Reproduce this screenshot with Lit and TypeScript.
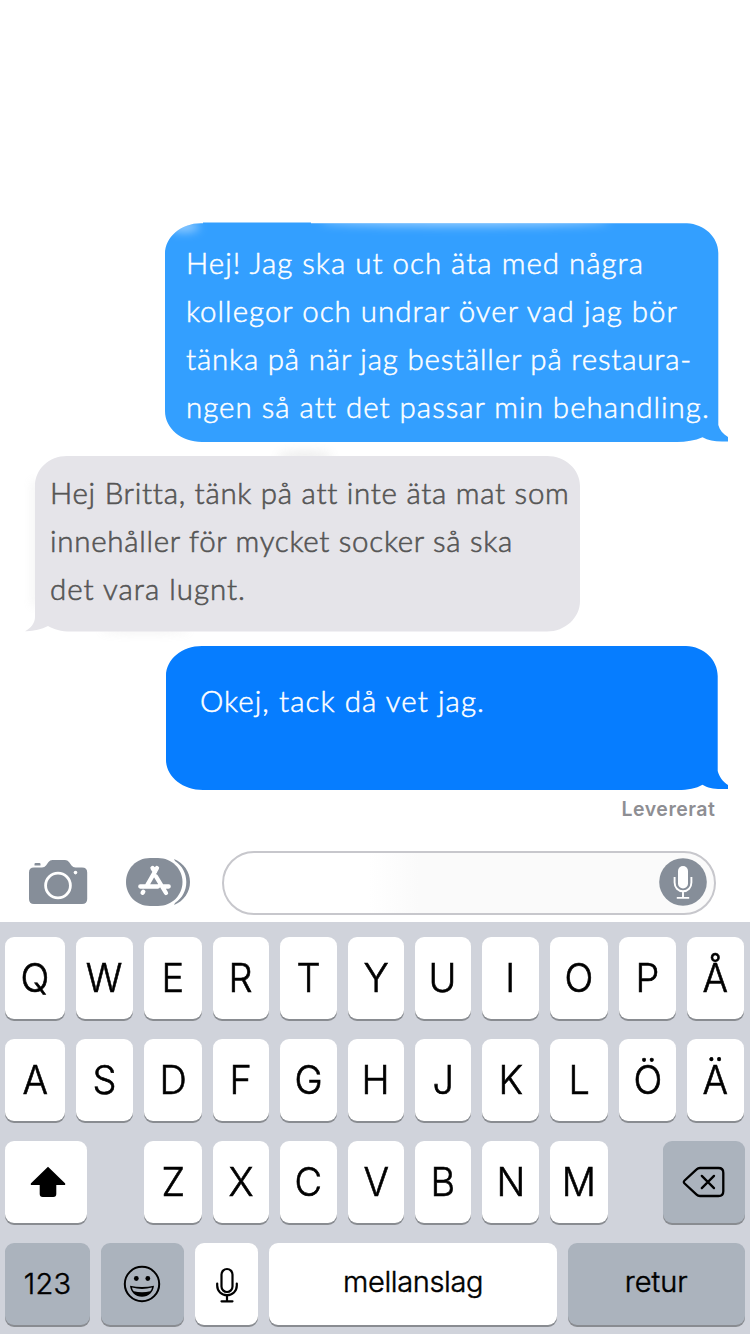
import { LitElement, html, svg, css } from "lit";
import { customElement, property } from "lit/decorators.js";
import { classMap } from "lit/directives/class-map.js";

type Line = { text: string; width: number };

/** One line of text, tracked so that its advance equals the given width. */
@customElement("tracked-line")
class TrackedLine extends LitElement {
  @property() text = "";
  @property({ type: Number }) width = 0;
  static styles = css`
    :host { display: block; white-space: nowrap; }
    .run { display: inline-block; }
  `;
  render() {
    return html`<span class="run">${this.text}</span>`;
  }
  updated() {
    const run = this.renderRoot.querySelector(".run") as HTMLElement;
    run.style.letterSpacing = "0px";
    const natural = run.getBoundingClientRect().width;
    run.style.letterSpacing = `${(this.width - natural) / this.text.length}px`;
  }
}

const shapes: Record<string, { w: number; h: number; d: string }> = {
  first: {
    w: 563, h: 219,
    d: "M36 0.3H522C539 1 553.3 14 553.3 30V202C554.5 207 558 211 563 214V218.6H557C549 218.6 543 217.2 537.5 214.3C530 217.6 521 219 512 219H37C16 219 0 205 0 188V31C0 14 16 0.3 36 0.3Z",
  },
  reply: {
    w: 555, h: 175.5,
    d: "M42 0H522C540 0 555 13 555 30V145C555 162 540 175.5 522 175.5H46C36 175.5 29 173.5 23 170C16 173.5 8 175.5 0 175.2C6 172 10 167 10 161V30C10 13 24 0 42 0Z",
  },
  last: {
    w: 562, h: 144,
    d: "M36 0H520C538 0.5 551.7 14 551.7 30V125C553 130.5 557 136 562 139V143H555C547 143 541.5 142 536.5 138.8C530 142.5 522 144 512 144H37C16 144 0 130 0 114V30C0 13 16 0 36 0Z",
  },
};

@customElement("chat-bubble")
class ChatBubble extends LitElement {
  @property() kind = "first";
  @property({ attribute: false }) lines: Line[] = [];
  static styles = css`
    :host { display: block; }
    .bubble { position: relative; box-sizing: border-box; font: 300 29.5px/48px Lato, "Open Sans", sans-serif; color: #fff; -webkit-text-stroke: 0.5px currentColor; }
    .shape { position: absolute; inset: 0; width: 100%; height: 100%; overflow: visible; }
    .text { position: relative; }
    .first { width: 563px; height: 219px; margin-left: 165px; padding: 16px 0 0 21px; }
    .first .shape { fill: #339fff; }
    .reply { width: 555px; height: 175.5px; margin-left: 25px; padding: 13px 0 0 25px; color: #555; -webkit-text-stroke-width: 0.6px; }
    .reply .shape { fill: #e5e4e9; }
    .last { width: 562px; height: 144px; margin-left: 166px; padding: 31px 0 0 34px; }
    .last .shape { fill: #067dff; }
  `;
  render() {
    const s = shapes[this.kind];
    return html`<div class=${classMap({ bubble: true, [this.kind]: true })}>
      <svg class="shape" viewBox="0 0 ${s.w} ${s.h}">
        <defs>
          <filter id="soft" x="-20%" y="-300%" width="140%" height="700%"><feGaussianBlur stdDeviation="5" /></filter>
          <clipPath id="clip"><path d=${s.d} /></clipPath>
        </defs>
        ${this.kind === "reply"
          ? svg`<g filter="url(#soft)" opacity=".13"><ellipse cx="280" cy="0" rx="28" ry="5" fill="#777"/><rect x="7" y="25" width="8" height="125" fill="#aaa"/><ellipse cx="120" cy="174" rx="45" ry="4" fill="#aaa"/></g>`
          : ""}
        <path d=${s.d} />
        ${this.kind === "first"
          ? svg`<path d="M38 -0.5H146V1H38Z"/><g clip-path="url(#clip)"><g filter="url(#soft)" fill="#fff"><ellipse cx="19" cy="4" rx="15" ry="5" opacity=".5"/><ellipse cx="300" cy="-2" rx="145" ry="5" opacity=".5"/></g></g>`
          : ""}
      </svg>
      <div class="text">
        ${this.lines.map((l) => html`<tracked-line .text=${l.text} .width=${l.width}></tracked-line>`)}
      </div>
    </div>`;
  }
}

const icons = {
  shift: svg`<svg class="shift" width="36" height="32" viewBox="0 0 36 32"><path d="M18 .8 35 17.2Q36 19 34 19H26.3V28Q26.3 31 23.3 31H12.7Q9.7 31 9.7 28V19H2Q0 19 1 17.2Z"/></svg>`,
  del: svg`<svg width="44" height="32" viewBox="0 0 44 32" fill="none" stroke="#000" stroke-width="2.3" stroke-linejoin="round" stroke-linecap="round"><path d="M18 2H36.5Q41.3 2 41.3 6.8V25.2Q41.3 30 36.5 30H18Q16 30 14.6 28.6L2.6 17.5Q1 16 2.6 14.5L14.6 3.4Q16 2 18 2Z"/><path d="M19.8 9.9 32 22.1M32 9.9 19.8 22.1"/></svg>`,
  smile: svg`<svg width="38" height="38" viewBox="0 0 38 38"><circle cx="19" cy="19" r="17.2" fill="none" stroke="#000" stroke-width="2"/><circle cx="13.3" cy="13.5" r="2.4"/><circle cx="24.8" cy="13.5" r="2.4"/><path d="M7 20.8Q19 23.4 31 20.8C30.3 27.2 25.5 31.8 19 31.8S7.7 27.2 7 20.8Z"/><path d="M9 22.6Q19 25.2 29 22.6C28.7 24.3 28 25.5 27.2 26.2Q19 28.2 10.8 26.2C10 25.5 9.3 24.3 9 22.6Z" fill="#abb3bd"/></svg>`,
  mic: svg`<svg width="24" height="36" viewBox="0 0 24 36" fill="none" stroke="#000" stroke-width="2.2" stroke-linecap="round"><rect x="6.5" y="2" width="11" height="23" rx="5.5"/><path d="M2.2 16.5V18.5C2.2 24 6.5 28.2 12 28.2S21.8 24 21.8 18.5V16.5M12 28.2V34M6.5 34.3H17.5"/></svg>`,
};

@customElement("app-root")
class AppRoot extends LitElement {
  static styles = css`
    :host { display: flex; flex-direction: column; width: 750px; height: 1334px; background: #fff; overflow: hidden; font-family: Inter, "Liberation Sans", sans-serif; color: #000; }
    .chat { box-sizing: border-box; height: 851px; padding-top: 223px; display: flex; flex-direction: column; gap: 14.2px; }
    .status { align-self: flex-end; width: 128.5px; margin-top: -7.5px; font-size: 19.5px; line-height: 24px; font-weight: 600; color: #8e8e93; }
    .compose { height: 71px; flex: none; display: flex; }
    .camera { width: 60px; height: 48px; margin: 7px 0 0 28px; fill: #868e99; }
    .apps { width: 66px; height: 50px; margin: 6px 0 0 37px; fill: #868e99; }
    .field { box-sizing: border-box; margin-left: 31px; width: 493.5px; height: 64px; border: 2px solid #c7c7cc; border-radius: 32px; display: flex; justify-content: flex-end; padding: 5px 6.5px 0 0;
      background: linear-gradient(90deg, #fff 145px, #fafafa 195px); }
    .voice { width: 48px; height: 48px; }
    .keyboard { box-sizing: border-box; height: 412px; flex: none; background: #d0d3db; padding: 15px 5px 0; display: flex; flex-direction: column; gap: 20px; }
    .row { height: 82px; }
    .letters { display: grid; column-gap: 11px; grid-template-columns: 60px 57px 58px 56px 57px 56px 56px 57px 58px 57px 57px; }
    .third { display: flex; gap: 11px; }
    .bottom { display: grid; column-gap: 11px; grid-template-columns: 84.5px 83px 63.5px 287.5px 177px; padding-left: 0.3px; }
    .key { display: flex; align-items: center; justify-content: center; background: #fff; border-radius: 9px; box-shadow: 0 2px 0 #898c91; font-size: 39.5px; line-height: 48px; height: 82px; }
    .cap { display: inline-block; transform: scaleX(0.96); font-weight: 300; -webkit-text-stroke: 0.6px #000; }
    .w56 { width: 56px; } .w57 { width: 57px; } .w58 { width: 58px; } .w82 { width: 82px; }
    .after-shift { margin-left: 46px; }
    .delete { margin-left: 44px; }
    .gray { background: #abb3bd; }
    .word { font-size: 29px; font-weight: 300; -webkit-text-stroke: 0.45px #000; }
    .word tracked-line { margin-top: -4px; }
    .word .digits { margin-top: 0; }
    .key svg { display: block; }
    .key .shift { margin-left: 3px; }
    .bottom .mic svg { margin-top: 2px; }
  `;

  private cap(letter: string, size = "") {
    return html`<div class="key ${size}"><span class="cap">${letter}</span></div>`;
  }

  render() {
    return html`
      <div class="chat">
        <chat-bubble kind="first" .lines=${[
          { text: "Hej! Jag ska ut och äta med några", width: 458 },
          { text: "kollegor och undrar över vad jag bör", width: 492 },
          { text: "tänka på när jag beställer på restaura-", width: 506 },
          { text: "ngen så att det passar min behandling.", width: 523 },
        ]}></chat-bubble>
        <chat-bubble kind="reply" .lines=${[
          { text: "Hej Britta, tänk på att inte äta mat som", width: 518 },
          { text: "innehåller för mycket socker så ska", width: 463 },
          { text: "det vara lugnt.", width: 196 },
        ]}></chat-bubble>
        <chat-bubble kind="last" .lines=${[{ text: "Okej, tack då vet jag.", width: 285 }]}></chat-bubble>
        <div class="status"><tracked-line .text=${"Levererat"} .width=${94}></tracked-line></div>
      </div>
      <div class="compose">
        <svg class="camera" viewBox="0 0 60 48">
          <path d="M6 9.5H14Q16.5 9.5 18 7.5L20.5 4Q22 2 24.5 2H37Q39.5 2 41 4L43.5 7.5Q45 9.5 47.5 9.5H54Q59.2 9.5 59.2 14.5V41Q59.2 46 54 46H6Q1 46 1 41V14.5Q1 9.5 6 9.5Z"/>
          <path d="M6.5 7.5V6Q6.5 5 7.5 5H11.5Q12.5 5 12.5 6V7.5Z"/>
          <circle cx="30" cy="27.5" r="12.4" fill="none" stroke="#fff" stroke-width="2.8"/>
          <circle cx="47.5" cy="14.6" r="1.8" fill="#fff"/>
        </svg>
        <svg class="apps" viewBox="0 0 66 50">
          <path d="M25 1H33C47 1 57.5 12 57.5 25S47 49 33 49H25C11 49 1 38 1 25S11 1 25 1Z"/>
          <path d="M49 2C59 6 65 15 65 25S59 44 49 48L50 46C57.5 41 61.3 33.5 61.3 25S57.5 9 50 4Z"/>
          <path d="M15.3 29.5H27M38 29.5H43.7M22 28.5 32 11M27.5 11 30 15M31 19.5 41 36M27 29.5H33M17.6 35.8 18.3 34.8" stroke="#fff" stroke-width="4.3" stroke-linecap="round" fill="none"/>
        </svg>
        <div class="field">
          <svg class="voice" viewBox="0 0 48 48">
            <circle cx="24" cy="24" r="23.8" fill="#868e99"/>
            <rect x="19" y="8" width="10" height="22.5" rx="5" fill="#fff"/>
            <path d="M15.6 19V24.5C15.6 29.5 19 33.2 24 33.2S32.4 29.5 32.4 24.5V19M24 33.2V40M17.8 39.9H30.2" fill="none" stroke="#fff" stroke-width="1.9"/>
          </svg>
        </div>
      </div>
      <div class="keyboard">
        <div class="row letters">${[..."QWERTYUIOPÅ"].map((c) => this.cap(c))}</div>
        <div class="row letters">${[..."ASDFGHJKLÖÄ"].map((c) => this.cap(c))}</div>
        <div class="row third">
          <div class="key w82">${icons.shift}</div>
          ${this.cap("Z", "w58 after-shift")}
          ${this.cap("X", "w56")}
          ${this.cap("C", "w57")}
          ${this.cap("V", "w56")}
          ${this.cap("B", "w56")}
          ${this.cap("N", "w57")}
          ${this.cap("M", "w58")}
          <div class="key w82 gray delete">${icons.del}</div>
        </div>
        <div class="row bottom">
          <div class="key gray word"><tracked-line class="digits" .text=${"123"} .width=${47.5}></tracked-line></div>
          <div class="key gray">${icons.smile}</div>
          <div class="key mic">${icons.mic}</div>
          <div class="key word"><tracked-line .text=${"mellanslag"} .width=${140}></tracked-line></div>
          <div class="key gray word"><tracked-line .text=${"retur"} .width=${63}></tracked-line></div>
        </div>
      </div>`;
  }
}
